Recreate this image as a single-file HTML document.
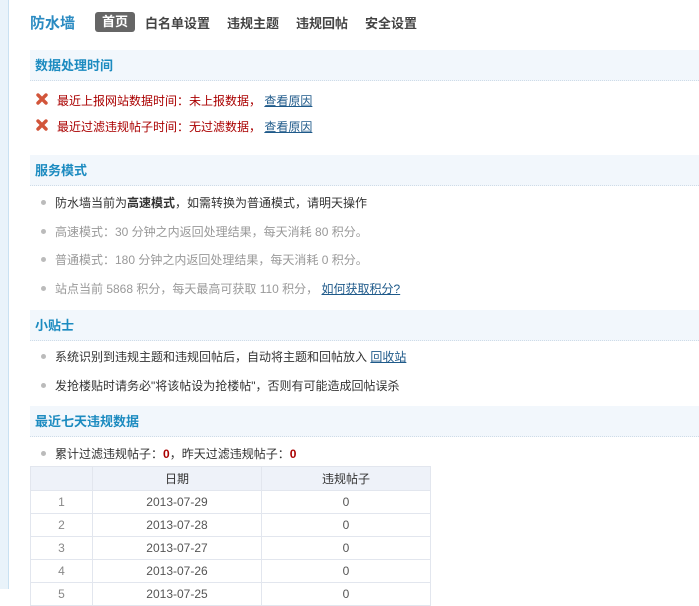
<!DOCTYPE html>
<html><head><meta charset="utf-8"><style>
*{margin:0;padding:0;box-sizing:border-box}
body{width:699px;height:589px;overflow:hidden;background:#fff;font:12px "Liberation Sans","Noto Sans CJK SC",sans-serif;color:#333;position:relative}
.strip{position:absolute;left:0;top:0;width:9px;height:589px;background:#e9f3fa;border-right:1px solid #c9e1f1}
.a{position:absolute;white-space:nowrap}
.title{left:30px;top:12px;font-size:15px;font-weight:bold;color:#2b8bc2}
.nav{top:13px;font-size:13px;font-weight:bold;color:#444}
.act{left:95px;top:12px;width:40px;height:20px;background:#666;color:#fff;border-radius:3px;text-align:center;line-height:20px;font-size:13px;font-weight:bold}
.hd{position:absolute;left:30px;right:0;height:31px;background:#f2f7fc;border-bottom:1px dotted #cfdce8;padding-left:5px;line-height:31px;font-size:13px;font-weight:bold;color:#1c8bc0}
.li{position:absolute;left:55px;white-space:nowrap}
.li:before{content:"";position:absolute;left:-14px;top:6px;width:5px;height:5px;border-radius:50%;background:#bbb}
.g{color:#999}
.red{color:#a00}
a{color:#1f5a8a;text-decoration:underline}
.x{position:absolute;left:36px;width:12px;height:12px}
table{position:absolute;left:30px;top:466px;width:401px;border-collapse:collapse;border:1px solid #c8d0e0;font-size:12px}
td,th{border:1px solid #e2e6ee;height:23px;text-align:center;color:#555;font-weight:normal}
th{background:#eef2f9;height:24px;color:#333}
td.n{color:#888}
</style></head><body>
<div class="strip"></div>
<div class="a title">防水墙</div>
<div class="a act">首页</div>
<div class="a nav" style="left:145px">白名单设置</div>
<div class="a nav" style="left:227px">违规主题</div>
<div class="a nav" style="left:296px">违规回帖</div>
<div class="a nav" style="left:365px">安全设置</div>

<div class="hd" style="top:50px">数据处理时间</div>
<svg class="x" style="top:93px" viewBox="0 0 12 12"><path d="M2 2L10 10M10 2L2 10" stroke="#d2553a" stroke-width="3.4" stroke-linecap="round"/></svg>
<div class="a red" style="left:57px;top:92px">最近上报网站数据时间：未上报数据， <a href="#">查看原因</a></div>
<svg class="x" style="top:119px" viewBox="0 0 12 12"><path d="M2 2L10 10M10 2L2 10" stroke="#d2553a" stroke-width="3.4" stroke-linecap="round"/></svg>
<div class="a red" style="left:57px;top:118px">最近过滤违规帖子时间：无过滤数据， <a href="#">查看原因</a></div>

<div class="hd" style="top:155px">服务模式</div>
<div class="li" style="top:194px">防水墙当前为<b>高速模式</b>，如需转换为普通模式，请明天操作</div>
<div class="li g" style="top:223px">高速模式：30 分钟之内返回处理结果，每天消耗 80 积分。</div>
<div class="li g" style="top:251px">普通模式：180 分钟之内返回处理结果，每天消耗 0 积分。</div>
<div class="li g" style="top:280px">站点当前 5868 积分，每天最高可获取 110 积分， <a href="#">如何获取积分?</a></div>

<div class="hd" style="top:310px">小贴士</div>
<div class="li" style="top:348px">系统识别到违规主题和违规回帖后，自动将主题和回帖放入 <a href="#">回收站</a></div>
<div class="li" style="top:377px">发抢楼贴时请务必"将该帖设为抢楼帖"，否则有可能造成回帖误杀</div>

<div class="hd" style="top:406px">最近七天违规数据</div>
<div class="li" style="top:445px">累计过滤违规帖子：<b class="red">0</b>，昨天过滤违规帖子：<b class="red">0</b></div>
<table>
<tr><th style="width:62px"></th><th style="width:169px">日期</th><th>违规帖子</th></tr>
<tr><td class="n">1</td><td>2013-07-29</td><td>0</td></tr>
<tr><td class="n">2</td><td>2013-07-28</td><td>0</td></tr>
<tr><td class="n">3</td><td>2013-07-27</td><td>0</td></tr>
<tr><td class="n">4</td><td>2013-07-26</td><td>0</td></tr>
<tr><td class="n">5</td><td>2013-07-25</td><td>0</td></tr>
</table>
</body></html>
